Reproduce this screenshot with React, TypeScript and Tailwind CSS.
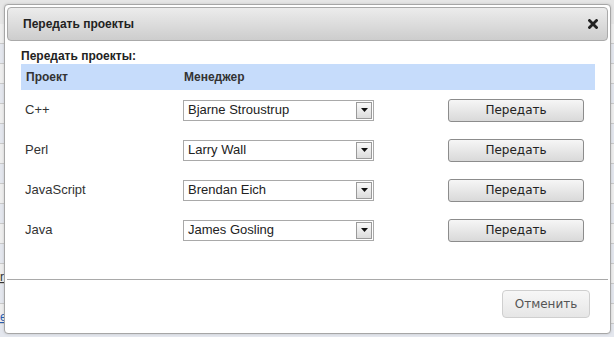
import React from 'react';

const projects = [
  { name: 'C++', manager: 'Bjarne Stroustrup' },
  { name: 'Perl', manager: 'Larry Wall' },
  { name: 'JavaScript', manager: 'Brendan Eich' },
  { name: 'Java', manager: 'James Gosling' },
];

const SelectBox: React.FC<{ value: string }> = ({ value }) => (
  <div className="flex h-[21px] w-[191px] items-center justify-between border border-[#a9a9a9] bg-white pl-[4px] pr-[1px]">
    <span className="text-[13px] text-[#222] [font-family:'Liberation_Sans',Arial,sans-serif]">{value}</span>
    <div className="flex h-[17px] w-[16px] items-center justify-center border border-[#9a9a9a] bg-gradient-to-b from-[#fafafa] to-[#dcdcdc]">
      <svg width="7" height="4" viewBox="0 0 7 4">
        <path d="M0 0h7L3.5 4z" fill="#111" />
      </svg>
    </div>
  </div>
);

const GreyButton: React.FC<{ label: string; className?: string }> = ({ label, className }) => (
  <button
    className={
      'flex items-center justify-center rounded-[3px] border border-[#8c8c8c] bg-gradient-to-b from-[#f6f6f6] to-[#d9d9d9] text-[12px] text-[#222] [font-family:"DejaVu_Sans",Verdana,sans-serif] ' +
      (className ?? '')
    }
  >
    {label}
  </button>
);

export default function App() {
  return (
    <div className="relative h-[337px] w-[614px] overflow-hidden bg-[#e6e6e6] [font-family:'Liberation_Sans',Arial,sans-serif]">
      {/* page behind the dialog */}
      <div className="flex flex-col pt-[24px]">
        {Array.from({ length: 16 }).map((_, i) => (
          <div key={i} className={'h-[20px] border-b border-[#c9c9c9] ' + (i % 2 ? 'bg-[#e4e7ee]' : 'bg-[#eeeeee]')}>
            {i === 12 && <span className="text-[12px] underline text-[#333]">r</span>}
            {i === 14 && <span className="text-[12px] underline text-[#2a5db0]">e</span>}
          </div>
        ))}
      </div>

      {/* dialog */}
      <div className="absolute left-[4px] top-[4px] flex h-[330px] w-[607px] flex-col rounded-[4px] border border-[#a6a6a6] bg-white p-[2px] shadow-[0_0_3px_rgba(0,0,0,0.15)]">
        <div className="flex h-[34px] items-center justify-between rounded-[4px] border border-[#aaaaaa] bg-gradient-to-b from-[#ececec] to-[#cdcdcd] pl-[15px] pr-[9px]">
          <span className="text-[12px] font-bold text-[#222]">Передать проекты</span>
          <svg width="10" height="10" viewBox="0 0 10 10">
            <path d="M1.5 1.5l7 7M8.5 1.5l-7 7" stroke="#222" strokeWidth="2.8" strokeLinecap="square" />
          </svg>
        </div>

        <div className="flex flex-col pl-[14px] pr-[13px] pt-[7px]">
          <div className="h-[16px] text-[12px] font-bold leading-[16px] text-[#222]">Передать проекты:</div>
          <div className="flex h-[26px] items-center bg-[#c6dcfb] text-[12px] font-bold text-[#333]">
            <div className="w-[162px] pl-[5px]">Проект</div>
            <div className="pl-[1px]">Менеджер</div>
          </div>
          {projects.map((p) => (
            <div key={p.name} className="flex h-[40px] items-center">
              <div className="w-[162px] pl-[4px] text-[13px] text-[#333]">{p.name}</div>
              <SelectBox value={p.manager} />
              <GreyButton label="Передать" className="ml-[74px] h-[23px] w-[136px]" />
            </div>
          ))}
        </div>

        <div className="mt-auto border-t border-[#a9a9a9] flex justify-end pr-[18px] pt-[10px] pb-[13px]">
          <button className="flex h-[28px] w-[88px] items-center justify-center rounded-[4px] border border-[#cfcfcf] bg-gradient-to-b from-[#f7f7f7] to-[#e6e6e6] text-[12px] text-[#555] [font-family:'DejaVu_Sans',Verdana,sans-serif]">
            Отменить
          </button>
        </div>
      </div>
    </div>
  );
}
